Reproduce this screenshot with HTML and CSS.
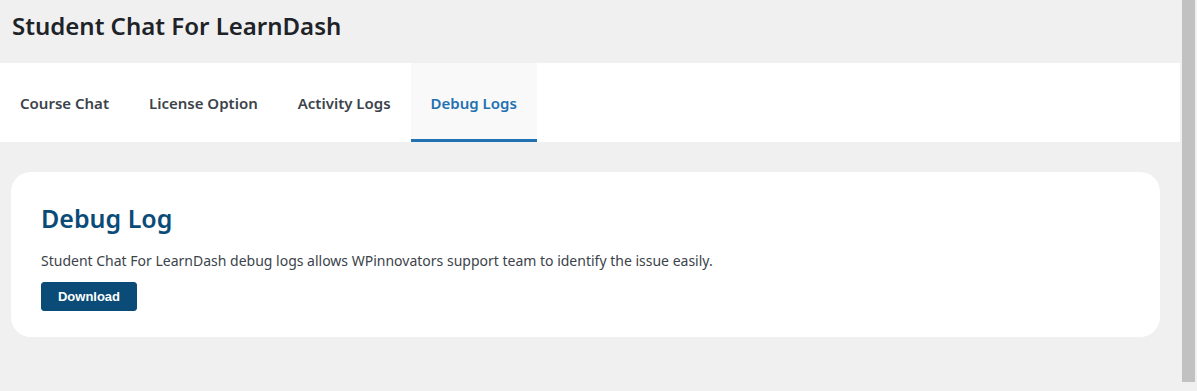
FILE: index.html
```html
<!DOCTYPE html>
<html lang="en">
<head>
<meta charset="UTF-8">
<meta name="viewport" content="width=device-width, initial-scale=1.0">
<title>Student Chat For LearnDash</title>
<link rel="stylesheet" href="styles.css">
</head>
<body>

<div class="wrap">
  <h1 class="page-title">Student Chat For LearnDash</h1>

  <div class="nav-tabs">
    <a href="#" class="nav-tab">Course Chat</a>
    <a href="#" class="nav-tab">License Option</a>
    <a href="#" class="nav-tab">Activity Logs</a>
    <a href="#" class="nav-tab active">Debug Logs</a>
  </div>

  <div class="card">
    <h2>Debug Log</h2>
    <p>Student Chat For LearnDash debug logs allows WPinnovators support team to identify the issue easily.</p>
    <button class="button-primary">Download</button>
  </div>
</div>

<div class="scrollbar">
  <div class="scrollbar-thumb"></div>
</div>

</body>
</html>
```

FILE: styles.css
```css
body {
  font-family: "Noto Sans", "Open Sans", sans-serif;
  background-color: #f0f0f1;
  color: #3c434a;
  margin: 0;
  padding: 0;
  display: flex;
  height: 391px;
  overflow: hidden;
}

.wrap {
  flex: 1;
}

.page-title {
  font-size: 24px;
  font-weight: 600;
  color: #1d2327;
  margin: 0;
  padding: 11px 12px 0;
  height: 52px;
  line-height: 30px;
}

/* Tab navigation */
.nav-tabs {
  display: flex;
  background-color: #fff;
  height: 79px;
}

.nav-tab {
  display: flex;
  align-items: center;
  padding: 0 20px;
  font-size: 15px;
  font-weight: 600;
  color: #3c434a;
  text-decoration: none;
  border-bottom: 3px solid transparent;
  padding-top: 3px;
}

.nav-tab.active {
  background-color: #f9f9f9;
  color: #2271b1;
  border-bottom-color: #2271b1;
}

/* Content card */
.card {
  background-color: #fff;
  border-radius: 20px;
  margin: 30px 20px 0 11px;
  padding: 30px 30px 26px;
}

.card h2 {
  font-size: 25px;
  font-weight: 600;
  color: #0a4b78;
  margin: 0 0 17px;
  line-height: 32px;
}

.card p {
  font-size: 14px;
  margin: 0 0 11px;
  line-height: 20px;
}

.button-primary {
  font-family: "Liberation Sans", Arial, sans-serif;
  font-size: 13px;
  font-weight: 700;
  color: #fff;
  background-color: #0a4b78;
  border: 1px solid #0a4b78;
  border-radius: 3px;
  width: 96px;
  height: 29px;
  padding: 0;
}

/* Fake window scrollbar */
.scrollbar {
  width: 13px;
  padding: 0 2px;
}

.scrollbar-thumb {
  background-color: #c1c1c1;
  height: 382px;
}
```
